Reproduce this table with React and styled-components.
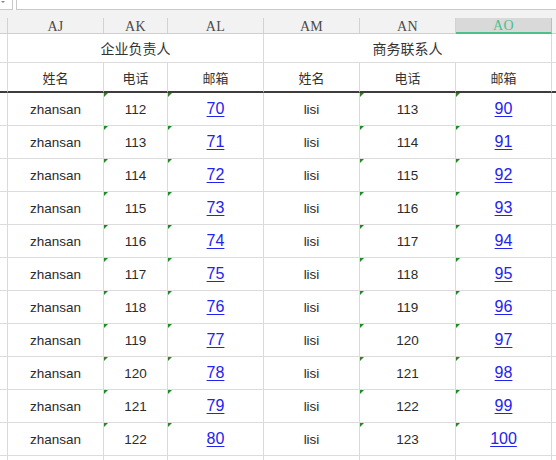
import React from 'react';
import styled, { createGlobalStyle } from 'styled-components';

const GlobalStyle = createGlobalStyle`
  html, body {
    margin: 0;
    padding: 0;
    background: #fff;
    overflow: hidden;
  }
  body {
    font-family: "Liberation Sans", "Noto Sans CJK SC", Arial, sans-serif;
  }
`;

const Sheet = styled.div`
  width: 556px;
  height: 460px;
  overflow: hidden;
  background: #fff;
`;

const Toolbar = styled.div`
  display: flex;
  gap: 3px;
  height: 10px;
  background: #fff;
`;

const NameBox = styled.div`
  position: relative;
  width: 12px;
  border-right: 1px solid #c9c9c9;
  border-bottom: 1px solid #c9c9c9;
  &::after {
    content: '';
    position: absolute;
    left: 1px;
    top: 1px;
    border-left: 2px solid transparent;
    border-right: 2px solid transparent;
    border-top: 2px solid #888;
  }
`;

const FormulaBox = styled.div`
  flex: 1;
  border-left: 1px solid #c9c9c9;
  border-bottom: 1px solid #c9c9c9;
`;

const Band = styled.div`
  height: 8px;
  background: #f2f2f2;
`;

const Grid = styled.div`
  display: grid;
  grid-template-columns: 8px 96px 64px 96px 96px 96px 96px 40px;
  align-items: start;
  width: 592px;
`;

const ColHead = styled.div`
  height: 16px;
  box-sizing: border-box;
  display: flex;
  align-items: center;
  justify-content: center;
  background: ${p => (p.$active ? '#d9d9d9' : '#f2f2f2')};
  border-right: 1px solid ${p => (p.$active ? '#bdbdbd' : '#d2d2d2')};
  border-bottom: ${p => (p.$active ? '2px solid #4cc08a' : '1px solid #cfcfcf')};
  font-family: "Liberation Serif", "Times New Roman", serif;
  font-size: 14px;
  color: ${p => (p.$active ? '#4cc08a' : '#4a4a4a')};
  letter-spacing: 0.3px;
  padding-top: 2px;
`;

const Cell = styled.div`
  position: relative;
  box-sizing: border-box;
  display: flex;
  align-items: center;
  justify-content: center;
  border-right: 1px solid #dadada;
  border-bottom: ${p => (p.$thick ? '2px solid #3d3d3d' : '1px solid #dcdcdc')};
  grid-column: ${p => (p.$span ? `span ${p.$span}` : 'auto')};
  height: ${p => p.$h || 33}px;
  font-size: 13.5px;
  color: #2b2b2b;
  white-space: nowrap;
  ${p =>
    p.$flag &&
    `
    &::before {
      content: '';
      position: absolute;
      left: 0;
      top: 0;
      border-top: 4px solid #1d8c24;
      border-right: 4px solid transparent;
    }
  `}
`;

const HeadText = styled.span`
  font-family: "Noto Sans CJK SC", "Liberation Sans", sans-serif;
  font-size: ${p => p.$size || 13}px;
  color: #333;
`;

const Link = styled.a`
  font-family: "Liberation Sans", Arial, sans-serif;
  font-size: 16px;
  color: #2323f0;
  text-decoration: underline;
  text-underline-offset: 2px;
  text-decoration-thickness: 1px;
`;

const columns = ['AJ', 'AK', 'AL', 'AM', 'AN', 'AO'];

const rows = Array.from({ length: 11 }, (_, i) => ({
  a: 'zhansan',
  aPhone: 112 + i,
  aMail: 70 + i,
  b: 'lisi',
  bPhone: 113 + i,
  bMail: 90 + i,
}));

export default function App() {
  return (
    <Sheet>
      <GlobalStyle />
      <Toolbar>
        <NameBox />
        <FormulaBox />
      </Toolbar>
      <Band />
      <Grid>
        <ColHead />
        {columns.map(c => (
          <ColHead key={c} $active={c === 'AO'}>{c}</ColHead>
        ))}
        <ColHead />

        <Cell $h={29} />
        <Cell $h={29} $span={3}>
          <HeadText $size={14}>企业负责人</HeadText>
        </Cell>
        <Cell $h={29} $span={3}>
          <HeadText $size={14}>商务联系人</HeadText>
        </Cell>
        <Cell $h={29} />

        <Cell $h={30} $thick />
        {['姓名', '电话', '邮箱', '姓名', '电话', '邮箱'].map((t, i) => (
          <Cell key={i} $h={30} $thick>
            <HeadText>{t}</HeadText>
          </Cell>
        ))}
        <Cell $h={30} $thick />

        {rows.map((r, i) => (
          <React.Fragment key={i}>
            <Cell />
            <Cell>{r.a}</Cell>
            <Cell $flag>{r.aPhone}</Cell>
            <Cell $flag>
              <Link href="#">{r.aMail}</Link>
            </Cell>
            <Cell>{r.b}</Cell>
            <Cell $flag>{r.bPhone}</Cell>
            <Cell $flag>
              <Link href="#">{r.bMail}</Link>
            </Cell>
            <Cell />
          </React.Fragment>
        ))}
        {Array.from({ length: 8 }, (_, i) => (
          <Cell key={`e${i}`} />
        ))}
      </Grid>
    </Sheet>
  );
}
